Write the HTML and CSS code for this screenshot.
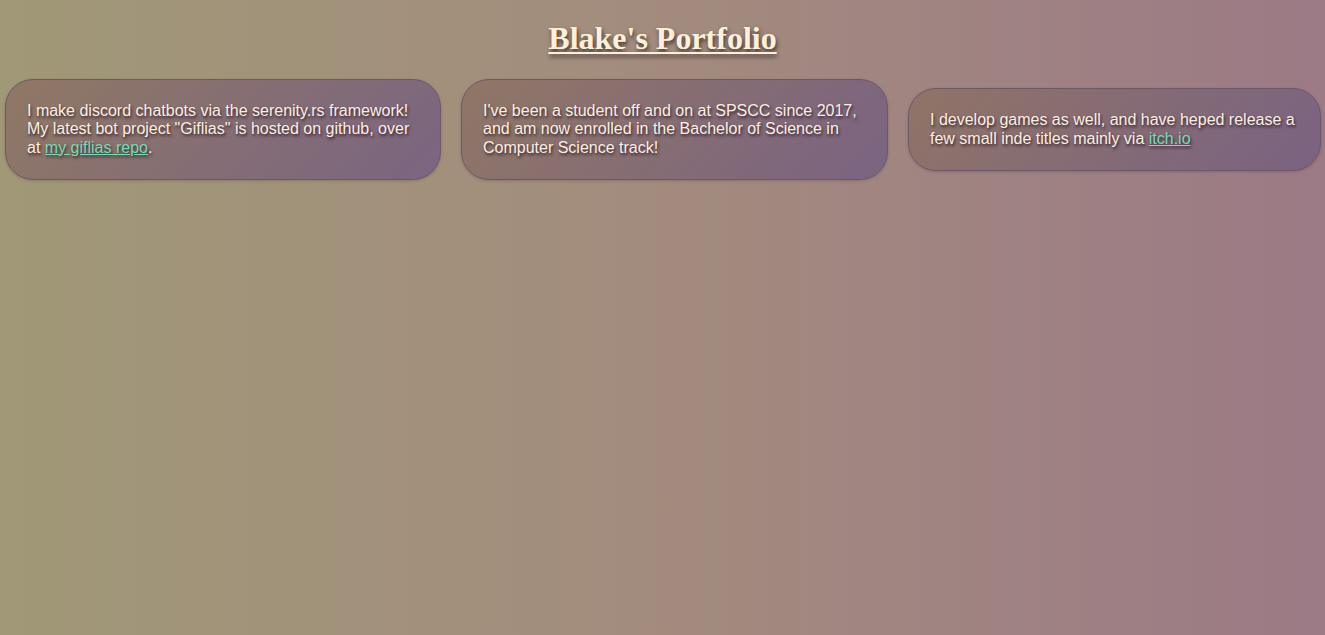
FILE: index.html
```html
<!DOCTYPE html>
<html lang="en">
<head>
<meta charset="utf-8">
<title>Blake's Portfolio</title>
<link rel="stylesheet" href="styles.css">
</head>
<body>
<header class="header">
  <h1 class="title">Blake's Portfolio</h1>
</header>
<main class="cards">
  <section class="card card-one">
    <p>I make discord chatbots via the serenity.rs framework! My latest bot project "Giflias" is hosted on github, over at <a href="#">my giflias repo</a>.</p>
  </section>
  <section class="card card-two">
    <p>I've been a student off and on at SPSCC since 2017, and am now enrolled in the Bachelor of Science in Computer Science track!</p>
  </section>
  <section class="card card-three">
    <p>I develop games as well, and have heped release a few small inde titles mainly via <a href="#">itch.io</a></p>
  </section>
</main>
</body>
</html>
```
FILE: styles.css
```css
html {
  min-height: 100%;
  background: linear-gradient(to right, #a09877 0%, #a38d7d 45%, #9c7a86 100%);
}
body {
  margin: 0;
  min-height: 635px;
  font-family: "Liberation Sans", Arial, sans-serif;
  color: #fbeee0;
}
.header {
  display: flex;
  justify-content: center;
  padding-top: 19px;
}
.title {
  margin: 0;
  font-family: "Liberation Serif", "Times New Roman", serif;
  font-weight: bold;
  font-size: 32px;
  line-height: 38px;
  color: #fdf0d8;
  text-decoration: underline;
  text-decoration-thickness: 2px;
  text-underline-offset: 3px;
  text-shadow: 1px 3px 4px rgba(40, 25, 30, 0.8);
}
.cards {
  display: grid;
  grid-template-columns: 436px 427px 413px;
  column-gap: 20px;
  align-items: center;
  padding: 22px 4px 0 5px;
}
.card {
  border: 1px solid #6c5866;
  border-radius: 28px;
  padding: 22px 21px;
  background: linear-gradient(135deg, rgba(140, 112, 96, 0.8) 0%, rgba(118, 96, 130, 0.9) 100%);
  box-shadow: 0 1px 3px rgba(60, 40, 60, 0.25);
}
.card p {
  margin: 0;
  font-size: 16px;
  line-height: 18.4px;
  text-shadow: 1px 2px 3px rgba(35, 18, 28, 0.85);
}
.card a {
  color: #72dcb5;
  text-decoration: underline;
}
```
